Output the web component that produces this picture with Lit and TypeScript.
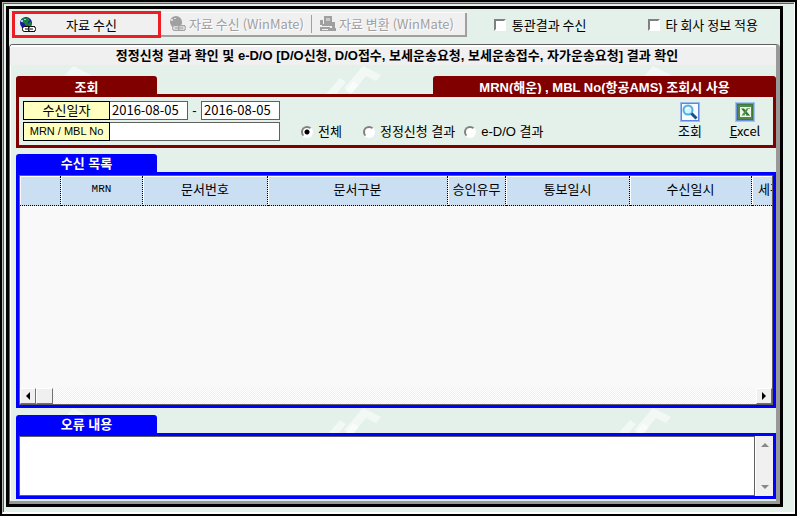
import { LitElement, html, css, svg } from "lit";
import { customElement, state } from "lit/decorators.js";

const globe = svg`
  <circle cx="7" cy="6" r="6" fill="var(--sea)"/>
  <path d="M4 1h5l2 2-2 2 1 3-3 1-2-3-3-1 1-3z" fill="var(--land)"/>
  <path d="M11 4l2 3-2 4-2-2z" fill="var(--land)"/>
  <path d="M2 3h2v2H2zM5 2h2v1H5z" fill="var(--shine)"/>
  <path d="M5 9h11v6H5z" fill="var(--ink)"/>
  <path d="M4 10h12v4H4z" fill="var(--chain)"/>
  <rect x="3.500" y="9.500" width="7" height="5" rx="2" fill="var(--chain)" stroke="var(--ink)"/>
  <rect x="9.500" y="9.500" width="7" height="5" rx="2" fill="var(--chain)" stroke="var(--ink)"/>
  <path d="M6 12h8" stroke="var(--ink)"/>`;

const computers = svg`
  <path d="M4 0h8v8H4zM2 8h10v2H2zM0 4h3v5H0zM12 6h3v6h-3zM0 11h10v4H0zM10 12h6v3h-6z" fill="#a0a0a0"/>
  <path d="M6 2h4v3H6z" fill="#c8c8c8"/>
  <path d="M2 13.500h6M4 10.500h8" stroke="#f0f0f0"/>`;

const lens = svg`
  <rect x=".5" y=".5" width="19" height="19" fill="#f8fcff" stroke="#9db7f0"/>
  <rect x="1.500" y="1.500" width="17" height="17" fill="none" stroke="#5f86dd"/>
  <circle cx="8" cy="8" r="4.500" fill="#d4f2ff" stroke="#49b2e6" stroke-width="2"/>
  <path d="M6 8a2.500 2.500 0 0 1 3-2" stroke="#fff" stroke-width="1.500" fill="none"/>
  <path d="M11.500 11.500l5 5" stroke="#154f86" stroke-width="3"/>`;

const excel = svg`
  <rect x=".5" y=".5" width="19" height="19" fill="#a7bdf0" stroke="#a8c0f4"/>
  <rect x="1.500" y="1.500" width="17" height="17" fill="#3c7a3a" stroke="#6c8fdb"/>
  <rect x="3" y="3" width="14" height="14" fill="#4f8a48"/>
  <rect x="5" y="5" width="11" height="10" fill="#eef6e8"/>
  <path d="M6 6.500h3l6 7h-3z" fill="#2f7434"/>
  <path d="M13.500 6.500h-2l-5 7h3z" fill="#4c9150"/>
  <path d="M11 13.500h4M12 6.500h3" stroke="#7fae79"/>`;

@customElement("app-root")
export class AppRoot extends LitElement {
  @state() private mode = "all";

  private columns = [
    ["", "c1"], ["MRN", "c2"], ["문서번호", "c3"], ["문서구분", "c4"],
    ["승인유무", "c5"], ["통보일시", "c6"], ["수신일시", "c7"], ["세관", "c8"],
  ];

  private modes = [
    ["all", "전체"], ["fix", "정정신청 결과"], ["edo", "e-D/O 결과"],
  ];

  static styles = css`
    :host {
      display: flex;
      box-sizing: border-box;
      min-height: 100vh;
      border: 2px solid #000;
      background: #e4f1ea;
      color: #000;
      font: 13px/16px "Liberation Sans", "Noto Sans CJK KR", sans-serif;
    }
    * { box-sizing: border-box; }
    button, input, textarea { font: inherit; color: inherit; margin: 0; border-radius: 0; }
    button { padding: 0; border: 0; background: none; }
    svg { display: block; flex: none; }
    .bevel {
      flex: 1;
      min-width: 0;
      display: flex;
      border: 1px solid #b8b8b8;
      border-right-color: #fff;
      border-bottom: 2px solid #fff;
      padding: 3px 11px 5px 3px;
      box-shadow: inset 1px 1px #5c5c5c;
    }
    .window {
      flex: 1;
      min-width: 0;
      display: flex;
      flex-direction: column;
      border: 3px solid #000;
    }
    .top { display: flex; align-items: center; height: 35px; padding: 1px 0 5px 3px; flex: none; }
    .tools {
      display: flex;
      align-items: center;
      height: 24px;
      background: #f0f0f0;
      border: solid #a0a0a0;
      border-width: 0 2px 2px 0;
      box-shadow: 0 -1px #fbfbfb;
    }
    .tool {
      display: flex;
      align-items: center;
      gap: 3px;
      height: 18px;
      width: 150px;
      padding-left: 8px;
      white-space: nowrap;
      font-family: "Noto Sans CJK KR", sans-serif;
      --sea: #a0a0a0; --land: #a0a0a0; --shine: #dcdcdc; --ink: #a0a0a0; --chain: #d8d8d8;
    }
    .tool:disabled { color: #a0a0a0; text-shadow: 1px 1px #fff; }
    .tool.convert { width: 154px; border-left: 1px solid #a0a0a0; }
    .tool.main {
      width: 149px;
      height: 27px;
      margin-top: 2px;
      padding-left: 4px;
      border: 3px solid #ee1c25;
      background: #f0f0f0;
      --sea: #1818a8; --land: #18803c; --shine: #8fd8f0; --ink: #000; --chain: #fff;
    }
    .main .cap { flex: 1; text-align: center; padding-right: 14px; }
    .check { display: flex; align-items: center; gap: 6px; white-space: nowrap; font-family: "Noto Sans CJK KR", sans-serif; }
    .spacer { flex: 1; }
    .check input {
      appearance: none;
      width: 12px;
      height: 12px;
      background: #fff;
      border: 2px solid;
      border-color: #808080 #fff #fff #808080;
    }
    .check + .check { margin: 0 22px 0 61px; }
    .panel {
      flex: 1;
      min-height: 0;
      display: flex;
      flex-direction: column;
      border: 1px solid #606060;
      border-right: 4px solid #989898;
      border-bottom: 3px solid #989898;
      border-radius: 4px 4px 0 0;
      padding-bottom: 2px;
      background: url('data:image/svg+xml,<svg xmlns="http://www.w3.org/2000/svg" width="290" height="342"><g fill="white" fill-opacity=".5"><path d="M100 3l18 9-5 6-10-5-14 17-8-5z"/><path d="M77 15l6 4-12 15-8-3z"/><path d="M90 18l6 4-8 9-6-3z"/></g></svg>') 253px 18px;
      box-shadow: inset 1px 0 #fff;
    }
    h1 {
      margin: 0 0 11px;
      padding-left: 8px;
      height: 20px;
      flex: none;
      border-top: 2px solid #fff;
      border-radius: 3px 3px 0 0;
      background: #f0f0f0;
      text-align: center;
      font-size: 13px;
      line-height: 18px;
      white-space: nowrap;
    }
    section { margin: 0 0 6px 6px; flex: none; display: flex; flex-direction: column; }
    .list { flex: 1; min-height: 150px; margin-bottom: 7px; }
    .error { margin-bottom: 0; }
    .tabs { display: flex; justify-content: space-between; height: 18px; color: #fff; }
    h2 {
      margin: 0;
      width: 141px;
      height: 18px;
      text-align: center;
      font-size: 13px;
      line-height: 20px;
      border-radius: 3px 3px 0 0;
      background: #00f;
      white-space: nowrap;
    }
    .query h2 { background: #800000; line-height: 24px; }
    .query .note { width: 343px; }
    .frame { border: 3px solid #00f; display: flex; min-width: 0; }
    .query .frame { border-color: #800000; padding: 4px 9px 4px 4px; }
    .fields { display: flex; flex-direction: column; gap: 2px; }
    .row { display: flex; align-items: center; height: 19px; }
    .row label.name {
      width: 87px;
      height: 19px;
      border: 1px solid #000;
      background: #ffffc0;
      text-align: center;
      line-height: 15px;
      font-family: "Noto Sans CJK KR", sans-serif;
    }
    .row label.latin { font: 11px/17px "Liberation Sans", sans-serif; }
    .row input {
      width: 78px;
      height: 19px;
      border: 1px solid #606060;
      border-left: 0;
      padding: 0 2px 2px;
      background: #fff;
      font-family: "Noto Sans CJK KR", sans-serif;
      outline: none;
    }
    .row .to { width: 79px; border-left: 1px solid #606060; }
    .row .dash { width: 13px; text-align: center; }
    .row .wide { width: 170px; }
    .modes { display: flex; align-self: flex-end; height: 19px; margin: 0 0 0 21px; gap: 21px; padding: 0; border: 0; }
    .modes label { display: flex; align-items: center; gap: 5px; white-space: nowrap; }
    .modes label:last-child { margin-left: -12px; }
    .modes input {
      appearance: none;
      width: 12px;
      height: 12px;
      border-radius: 6px;
      border: 2px solid;
      border-color: #808080 #fff #fff #808080;
      background: #fff;
    }
    .modes input:checked { background: radial-gradient(circle, #000 0 2px, #fff 3px); }
    .actions { display: flex; gap: 17px; margin-left: auto; padding-top: 1px; }
    .action { width: 38px; display: flex; flex-direction: column; align-items: center; gap: 1px; white-space: nowrap; font-family: "Noto Sans CJK KR", sans-serif; }
    .list .frame { flex: 1; flex-direction: column; }
    .grid { flex: 1; background: #f9f9f9; overflow: hidden; border: 1px solid #606060; border-bottom: 0; }
    table { width: 100%; table-layout: fixed; border-collapse: separate; border-spacing: 0; }
    th {
      height: 30px;
      padding: 0 0 4px;
      border-right: 1px dotted #000;
      border-bottom: 1px dotted #000;
      background: #cbdff3;
      box-shadow: inset 1px 1px #fff;
      font: 13px/16px "Noto Sans CJK KR", sans-serif;
      white-space: nowrap;
      overflow: hidden;
    }
    .c1 { width: 41px; } .c2 { width: 82px; font: 11px/16px "Liberation Mono", monospace; }
    .c3 { width: 125px; } .c4 { width: 180px; } .c5 { width: 58px; }
    .c6 { width: 124px; } .c7 { width: 122px; }
    .c8 { text-align: left; padding-left: 6px; border-right: 0; }
    .hbar {
      display: flex;
      height: 17px;
      flex: none;
      background: repeating-conic-gradient(#f0f0f0 0 25%, #fff 0 50%) 0 0 / 2px 2px;
      border: solid #606060;
      border-width: 0 1px 1px;
    }
    .hbar button, .thumb {
      width: 16px;
      height: 16px;
      background: #f0f0f0;
      border: 1px solid;
      border-color: #fff #707070 #707070 #fff;
      display: flex;
      align-items: center;
      justify-content: center;
    }
    .thumb { width: 17px; }
    .hbar .right { margin-left: auto; }
    textarea {
      flex: 1;
      min-width: 0;
      height: 60px;
      resize: none;
      border: 1px solid #606060;
      background: #fff;
      outline: none;
      overflow: hidden;
    }
    .vbar {
      width: 18px;
      padding: 4px 0;
      display: flex;
      flex-direction: column;
      justify-content: space-between;
      background: #f0f0f0;
      border-left: 1px solid #fff;
    }
    .vbar button { height: 10px; display: flex; align-items: center; justify-content: center; }
  `;

  private arrow(d: string, fill: string, w: number, h: number) {
    return html`<svg width=${w} height=${h} aria-hidden="true"><path d=${d} fill=${fill} /></svg>`;
  }

  render() {
    return html`
      <div class="bevel"><main class="window">
        <div class="top">
          <div class="tools">
            <button class="tool main">
              <svg width="17" height="16" aria-hidden="true">${globe}</svg><span class="cap">자료 수신</span>
            </button>
            <button class="tool" disabled>
              <svg width="17" height="16" aria-hidden="true">${globe}</svg>자료 수신 (WinMate)
            </button>
            <button class="tool convert" disabled>
              <svg width="16" height="16" aria-hidden="true">${computers}</svg>자료 변환 (WinMate)
            </button>
          </div>
          <span class="spacer"></span>
          <label class="check"><input type="checkbox" />통관결과 수신</label>
          <label class="check"><input type="checkbox" />타 회사 정보 적용</label>
        </div>
        <div class="panel">
          <h1>정정신청 결과 확인 및 e-D/O [D/O신청, D/O접수, 보세운송요청, 보세운송접수, 자가운송요청] 결과 확인</h1>
          <section class="query">
            <div class="tabs"><h2>조회</h2><h2 class="note">MRN(해운) , MBL No(항공AMS) 조회시 사용</h2></div>
            <div class="frame">
              <div class="fields">
                <div class="row">
                  <label class="name" for="from">수신일자</label>
                  <input id="from" value="2016-08-05" />
                  <span class="dash">-</span>
                  <input class="to" aria-label="수신일자" value="2016-08-05" />
                </div>
                <div class="row">
                  <label class="name latin" for="mrn">MRN / MBL No</label>
                  <input id="mrn" class="wide" />
                </div>
              </div>
              <fieldset class="modes">
                ${this.modes.map(([id, name]) => html`
                  <label><input type="radio" name="mode" .checked=${this.mode === id}
                    @change=${() => (this.mode = id)} />${name}</label>`)}
              </fieldset>
              <div class="actions">
                <button class="action"><svg width="20" height="20" aria-hidden="true">${lens}</svg>조회</button>
                <button class="action"><svg width="20" height="20" aria-hidden="true">${excel}</svg><span><u>E</u>xcel</span></button>
              </div>
            </div>
          </section>
          <section class="list">
            <div class="tabs"><h2>수신 목록</h2></div>
            <div class="frame">
              <div class="grid">
                <table><thead><tr>
                  ${this.columns.map(([name, cls]) => html`<th class=${cls}>${name}</th>`)}
                </tr></thead></table>
              </div>
              <div class="hbar">
                <button aria-label="왼쪽">${this.arrow("M4 0v8L0 4z", "#000", 4, 8)}</button>
                <span class="thumb"></span>
                <button class="right" aria-label="오른쪽">${this.arrow("M0 0v8l4-4z", "#000", 4, 8)}</button>
              </div>
            </div>
          </section>
          <section class="error">
            <div class="tabs"><h2>오류 내용</h2></div>
            <div class="frame">
              <textarea aria-label="오류 내용"></textarea>
              <div class="vbar">
                <button aria-label="위">${this.arrow("M0 4h8L4 0z", "#888", 8, 4)}</button>
                <button aria-label="아래">${this.arrow("M0 0h8L4 4z", "#888", 8, 4)}</button>
              </div>
            </div>
          </section>
        </div>
      </main></div>`;
  }
}
